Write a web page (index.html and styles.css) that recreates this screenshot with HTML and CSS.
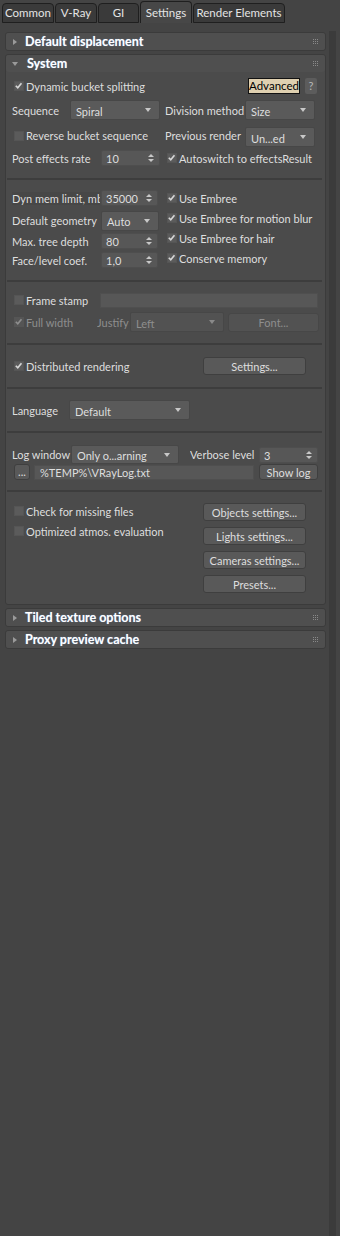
FILE: index.html
```html
<!DOCTYPE html>
<html>

<head>
    <title>Render Setup - Settings</title>
    <link rel="stylesheet" href="styles.css">
</head>

<body>

    <div class="tabs">
        <div class="tab tab-common">Common</div>
        <div class="tab tab-vray">V-Ray</div>
        <div class="tab tab-gi">GI</div>
        <div class="tab tab-settings active">Settings</div>
        <div class="tab tab-elements">Render Elements</div>
    </div>

    <div class="panel">
        <div class="rollouts">

            <div class="rollout">
                <div class="rhead"><span class="tri"></span><span class="rtitle">Default displacement</span><span class="grip"></span></div>
            </div>

            <div class="rollout">
                <div class="rhead"><span class="tri open"></span><span class="rtitle">System</span><span class="grip"></span></div>
                <div class="rbody">

                    <div class="group g1">
                        <div class="row">
                            <div class="cell"><span class="cb on"><svg viewBox="0 0 10 10"><path d="M2 5.2 L4.2 7.6 L8.3 2.4"/></svg></span><span>Dynamic bucket splitting</span></div>
                            <div class="cell cell-end"><span class="btn-adv">Advanced</span><span class="btn-help">?</span></div>
                        </div>
                        <div class="row">
                            <div class="cell"><span class="lbl w58">Sequence</span><span class="dd w90">Spiral</span></div>
                            <div class="cell"><span class="lbl w80">Division method</span><span class="dd w70">Size</span></div>
                        </div>
                        <div class="row">
                            <div class="cell"><span class="cb"></span><span>Reverse bucket sequence</span></div>
                            <div class="cell"><span class="lbl w80">Previous render</span><span class="dd w70 dd-low">Un...ed</span></div>
                        </div>
                        <div class="row">
                            <div class="cell"><span class="lbl w89">Post effects rate</span><span class="spin w59">10</span></div>
                            <div class="cell"><span class="cb on"><svg viewBox="0 0 10 10"><path d="M2 5.2 L4.2 7.6 L8.3 2.4"/></svg></span><span>Autoswitch to effectsResult</span></div>
                        </div>
                    </div>

                    <div class="group g2">
                        <div class="stack stack-left">
                            <div class="line"><span class="lbl lbl-box w88">Dyn mem limit, mb</span><span class="spin w57">35000</span></div>
                            <div class="line line-dd"><span class="lbl w89">Default geometry</span><span class="dd w58">Auto</span></div>
                            <div class="line"><span class="lbl w89">Max. tree depth</span><span class="spin w57">80</span></div>
                            <div class="line"><span class="lbl w89">Face/level coef.</span><span class="spin w57">1,0</span></div>
                        </div>
                        <div class="stack stack-right">
                            <div class="line"><span class="cb on"><svg viewBox="0 0 10 10"><path d="M2 5.2 L4.2 7.6 L8.3 2.4"/></svg></span><span>Use Embree</span></div>
                            <div class="line"><span class="cb on"><svg viewBox="0 0 10 10"><path d="M2 5.2 L4.2 7.6 L8.3 2.4"/></svg></span><span>Use Embree for motion blur</span></div>
                            <div class="line"><span class="cb on"><svg viewBox="0 0 10 10"><path d="M2 5.2 L4.2 7.6 L8.3 2.4"/></svg></span><span>Use Embree for hair</span></div>
                            <div class="line"><span class="cb on"><svg viewBox="0 0 10 10"><path d="M2 5.2 L4.2 7.6 L8.3 2.4"/></svg></span><span>Conserve memory</span></div>
                        </div>
                    </div>

                    <div class="group g3">
                        <div class="line"><span class="cb"></span><span class="w74">Frame stamp</span><span class="field stamp-field"></span></div>
                        <div class="line line-dd dim">
                            <span class="cb on"><svg viewBox="0 0 10 10"><path d="M2 5.2 L4.2 7.6 L8.3 2.4"/></svg></span><span class="w71">Full width</span>
                            <span class="lbl w33">Justify</span><span class="dd w94">Left</span>
                            <span class="btn btn-font">Font...</span>
                        </div>
                    </div>

                    <div class="group g4">
                        <div class="cell"><span class="cb on"><svg viewBox="0 0 10 10"><path d="M2 5.2 L4.2 7.6 L8.3 2.4"/></svg></span><span>Distributed rendering</span></div>
                        <span class="btn w103">Settings...</span>
                    </div>

                    <div class="group g5">
                        <span class="lbl w57">Language</span><span class="dd w121">Default</span>
                    </div>

                    <div class="group g6">
                        <div class="line line-dd">
                            <span class="lbl w59">Log window</span><span class="dd w108">Only o...arning</span>
                            <span class="lbl w69 verbose">Verbose level</span><span class="spin w59">3</span>
                        </div>
                        <div class="line">
                            <span class="btn btn-dots">...</span>
                            <span class="field log-field">%TEMP%\VRayLog.txt</span>
                            <span class="btn btn-show">Show log</span>
                        </div>
                    </div>

                    <div class="group g7">
                        <div class="stack">
                            <div class="line"><span class="cb"></span><span>Check for missing files</span></div>
                            <div class="line"><span class="cb"></span><span>Optimized atmos. evaluation</span></div>
                        </div>
                        <div class="stack buttons">
                            <span class="btn">Objects settings...</span>
                            <span class="btn">Lights settings...</span>
                            <span class="btn">Cameras settings...</span>
                            <span class="btn">Presets...</span>
                        </div>
                    </div>

                </div>
            </div>

            <div class="rollout">
                <div class="rhead"><span class="tri"></span><span class="rtitle">Tiled texture options</span><span class="grip"></span></div>
            </div>

            <div class="rollout">
                <div class="rhead"><span class="tri"></span><span class="rtitle">Proxy preview cache</span><span class="grip"></span></div>
            </div>

        </div>
        <div class="scrollbar"></div>
    </div>

</body>

</html>
```

FILE: styles.css
```css
body {
    margin: 0;
    width: 340px;
    height: 1236px;
    overflow: hidden;
    background: #444444;
    font-family: Lato, "Open Sans", sans-serif;
    font-size: 11px;
    color: #dedede;
    white-space: nowrap;
}

/* tab strip */

.tabs {
    display: flex;
    align-items: flex-end;
    height: 23px;
    padding-left: 2px;
    gap: 1px;
}

.tab {
    box-sizing: border-box;
    height: 20px;
    border: 1px solid #1f1f1f;
    border-radius: 4px 4px 0 0;
    background: #3a3a3a;
    text-align: center;
    line-height: 18px;
    font-size: 11.5px;
    color: #e4e4e4;
}

.tab-common { width: 52px; }
.tab-vray { width: 42px; }
.tab-gi { width: 41px; }
.tab-settings { width: 52px; }
.tab-elements { width: 92px; }

.tab.active {
    height: 22px;
    background: #474747;
    border-bottom: none;
    line-height: 21px;
}

/* rollouts */

.panel {
    display: flex;
    padding-top: 8px;
}

.rollouts {
    width: 321px;
    margin: 1px 0 0 5px;
    display: flex;
    flex-direction: column;
    gap: 3px;
}

.scrollbar {
    width: 7px;
    height: 1205px;
    margin-left: 3px;
    background: #3b3b3b;
}

.rollout {
    border: 1px solid #3b3b3b;
    border-radius: 3px;
    background: #4b4b4b;
}

.rhead {
    display: flex;
    align-items: center;
    height: 17px;
    padding: 0 6px 0 6px;
    background: #4f4f4f;
    border-radius: 3px;
}

.tri {
    width: 0;
    height: 0;
    margin: 0 8px 0 1px;
    border-top: 3px solid transparent;
    border-bottom: 3px solid transparent;
    border-left: 4px solid #9a9a9a;
}

.tri.open {
    margin-left: 0;
    border-left: 3px solid transparent;
    border-right: 3px solid transparent;
    border-top: 4px solid #9a9a9a;
    border-bottom: none;
    margin-right: 9px;
}

.rtitle {
    flex: 1;
    font-weight: bold;
    font-size: 12.5px;
    color: #ffffff;
    text-shadow: 0 0 1px rgba(140, 190, 255, 0.7);
}

.grip {
    position: relative;
    width: 5px;
    height: 5px;
    margin-right: 1px;
}

.grip::before {
    content: "";
    position: absolute;
    left: 0;
    top: 0;
    width: 1px;
    height: 1px;
    background: #8a8a8a;
    box-shadow: 2px 0 #8a8a8a, 4px 0 #8a8a8a,
        0 2px #8a8a8a, 2px 2px #8a8a8a, 4px 2px #8a8a8a,
        0 4px #8a8a8a, 2px 4px #8a8a8a, 4px 4px #8a8a8a;
}

.rbody {
    padding: 0 7px 0 6px;
}

.group {
    border-bottom: 2px solid #3d3d3d;
    margin: 0 -4px 0 -5px;
    padding-left: 5px;
    padding-right: 4px;
}

.group:last-child {
    border-bottom: none;
}

/* generic controls */

.row {
    display: grid;
    grid-template-columns: 153px 1fr;
    height: 20px;
    align-items: center;
}

.cell,
.line {
    display: flex;
    align-items: center;
}

.cell-end {
    justify-content: flex-end;
    padding-right: 1px;
}

.lbl {
    flex-shrink: 0;
    overflow: hidden;
}

.lbl-box {
    background: #474747;
    margin-right: 1px;
}

.cb {
    flex-shrink: 0;
    box-sizing: border-box;
    width: 10px;
    height: 10px;
    margin: 0 2px 0 2px;
    background: #5b5b5b;
    border: 1px solid #555555;
}

.cb svg {
    display: block;
    width: 9px;
    height: 9px;
    margin: -1px 0 0 -1px;
}

.cb path {
    fill: none;
    stroke: #d6d6d6;
    stroke-width: 1.8;
}

.dd {
    box-sizing: border-box;
    position: relative;
    display: flex;
    align-items: center;
    height: 20px;
    padding: 2px 0 0 5px;
    background: #5a5a5a;
    border: 1px solid #474747;
    border-radius: 2px;
    flex-shrink: 0;
}

.dd::after {
    content: "";
    position: absolute;
    right: 8px;
    top: 7px;
    border-left: 3px solid transparent;
    border-right: 3px solid transparent;
    border-top: 4px solid #c8c8c8;
}

.spin {
    box-sizing: border-box;
    position: relative;
    display: flex;
    align-items: center;
    height: 16px;
    padding: 1px 0 0 4px;
    background: #575757;
    border: 1px solid #4e4e4e;
    border-radius: 2px;
    flex-shrink: 0;
}

.spin::before,
.spin::after {
    content: "";
    position: absolute;
    right: 5px;
    border-left: 3px solid transparent;
    border-right: 3px solid transparent;
}

.spin::before {
    top: 3px;
    border-bottom: 3px solid #c8c8c8;
}

.spin::after {
    top: 8px;
    border-top: 3px solid #c8c8c8;
}

.field {
    box-sizing: border-box;
    display: flex;
    align-items: center;
    height: 15px;
    padding: 1px 0 0 8px;
    background: #575757;
    border: 1px solid #4f4f4f;
}

.btn {
    box-sizing: border-box;
    display: flex;
    align-items: center;
    justify-content: center;
    height: 18px;
    padding-top: 1px;
    background: #595959;
    border: 1px solid #3f3f3f;
    border-radius: 3px;
    flex-shrink: 0;
}

.btn-adv {
    box-sizing: border-box;
    width: 52px;
    height: 16px;
    line-height: 14px;
    text-align: center;
    background: #dfd0b0;
    border: 1px solid #111111;
    color: #000000;
    font-size: 11.5px;
}

.btn-help {
    box-sizing: border-box;
    width: 12px;
    height: 16px;
    margin-left: 5px;
    line-height: 16px;
    text-align: center;
    background: #5c5c5c;
    border-radius: 2px;
    color: #b8b8b8;
}

.dim {
    color: #8e8e8e;
}

.dim .cb {
    background: #555555;
}

.dim .cb path {
    stroke: #8e8e8e;
}

.dim .dd,
.dim .btn {
    background: #525252;
    border-color: #474747;
}

.dim .dd::after {
    border-top-color: #8a8a8a;
}

/* widths */

.w33 { width: 33px; }
.w57 { width: 57px; }
.w58 { width: 58px; }
.w59 { width: 59px; }
.w69 { width: 69px; }
.w70 { width: 70px; }
.w71 { width: 71px; }
.w74 { width: 74px; }
.w80 { width: 80px; }
.w88 { width: 88px; }
.w89 { width: 89px; }
.w90 { width: 90px; }
.w94 { width: 94px; }
.w103 { width: 103px; }
.w108 { width: 108px; }
.w121 { width: 121px; }

/* groups */

.g1 {
    display: flex;
    flex-direction: column;
    gap: 4px;
    padding-top: 4px;
    padding-bottom: 10px;
}

.g1 .dd-low {
    margin-top: 3px;
}

.g2 {
    display: grid;
    grid-template-columns: 153px 1fr;
    padding-top: 8px;
    padding-bottom: 12px;
}

.stack-left {
    display: flex;
    flex-direction: column;
    gap: 3px;
    padding-top: 2px;
}

.stack-left .line {
    height: 16px;
}

.stack-left .line-dd {
    height: 19px;
    margin-top: 2px;
}

.stack-right .line {
    height: 20px;
}

.g3 {
    display: flex;
    flex-direction: column;
    gap: 4px;
    padding-top: 10px;
    padding-bottom: 11px;
}

.g3 .line {
    height: 16px;
}

.g3 .line-dd {
    height: 20px;
}

.stamp-field {
    flex: 1;
}

.btn-font {
    flex: 1;
    height: 19px;
    margin-left: 4px;
    margin-right: -1px;
}

.g4 {
    display: grid;
    grid-template-columns: 191px 103px;
    align-items: center;
    padding-top: 12px;
    padding-bottom: 12px;
}

.g5 {
    display: flex;
    align-items: center;
    padding-top: 11px;
    padding-bottom: 11px;
}

.g6 {
    display: flex;
    flex-direction: column;
    padding-top: 12px;
    padding-bottom: 10px;
}

.g6 .dd {
    height: 19px;
}

.verbose {
    margin-left: 11px;
}

.g6 .line {
    height: 16px;
}

.g6 .line-dd {
    height: 19px;
}

.btn-dots {
    width: 16px;
    height: 16px;
    margin-left: 2px;
    padding-bottom: 3px;
}

.log-field {
    width: 220px;
    margin-left: 4px;
    padding-left: 5px;
}

.btn-show {
    width: 59px;
    height: 16px;
    margin-left: 5px;
}

.g7 {
    display: grid;
    grid-template-columns: 191px 103px;
    padding-top: 9px;
    padding-bottom: 11px;
}

.g7 .stack .line {
    height: 20px;
}

.buttons {
    display: flex;
    flex-direction: column;
    gap: 6px;
    padding-top: 2px;
}
```
